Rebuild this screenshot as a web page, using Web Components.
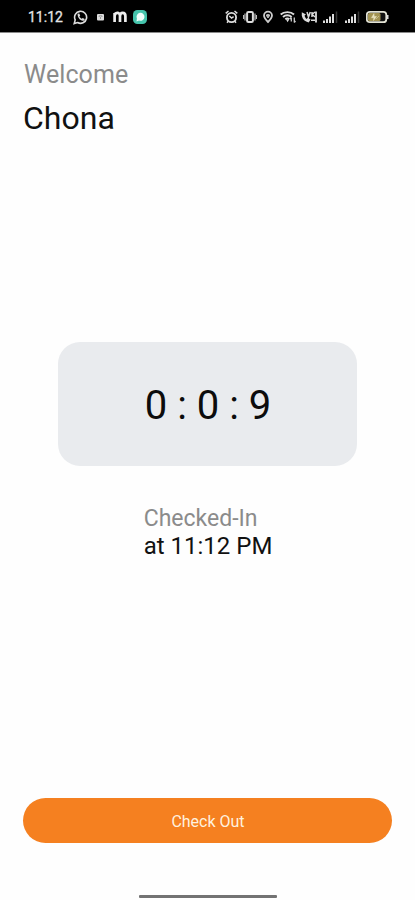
<!DOCTYPE html>
<html lang="en">
<head>
    <meta charset="UTF-8">
    <title>Check In</title>
    <style>
        body {
            margin: 0;
            background: #fefefe;
            font-family: Roboto, sans-serif;
        }
    </style>
</head>
<body>

<template id="status-bar">
    <style>
        :host {
            display: flex;
            justify-content: space-between;
            align-items: center;
            height: 31px;
            padding: 1px 26px 0 28px;
            background: #000;
            border-bottom: 1px solid #8a8a8a;
            color: #e4e4e4;
            font-size: 14px;
        }

        .group {
            display: flex;
            align-items: center;
        }

        .time {
            width: 45px;
            white-space: nowrap;
            -webkit-text-stroke: .3px;
        }
    </style>
    <div class="group">
        <div class="time"><slot name="time"></slot></div>
        <slot name="left"></slot>
    </div>
    <div class="group">
        <slot name="right"></slot>
    </div>
</template>

<template id="check-in-screen">
    <style>
        :host {
            display: flex;
            flex-direction: column;
            height: 900px;
            overflow: hidden;
        }

        .header {
            padding: 27px 24px 0;
            height: 282px;
            box-sizing: border-box;
        }

        .main {
            flex: 1;
        }

        .footer {
            padding: 0 23px 52px;
        }

        .home {
            width: 138px;
            height: 3px;
            margin: 0 auto 2px;
            border-radius: 1px;
            background: #737373;
        }
    </style>
    <slot name="status"></slot>
    <div class="header"><slot name="header"></slot></div>
    <div class="main"><slot></slot></div>
    <div class="footer"><slot name="footer"></slot></div>
    <div class="home"></div>
</template>

<check-in-screen>
    <status-bar slot="status">
        <span slot="time">11:12</span>
        <status-icon slot="left" name="whatsapp"></status-icon>
        <status-icon slot="left" name="app"></status-icon>
        <status-icon slot="left" name="moj"></status-icon>
        <status-icon slot="left" name="chat"></status-icon>
        <status-icon slot="right" name="alarm"></status-icon>
        <status-icon slot="right" name="vibrate"></status-icon>
        <status-icon slot="right" name="pin"></status-icon>
        <status-icon slot="right" name="wifi"></status-icon>
        <status-icon slot="right" name="call"></status-icon>
        <status-icon slot="right" name="signal"></status-icon>
        <status-icon slot="right" name="signal"></status-icon>
        <status-icon slot="right" name="battery"></status-icon>
    </status-bar>
    <welcome-title slot="header">
        <span slot="label">Welcome</span>
        <span slot="name">Chona</span>
    </welcome-title>
    <timer-card>0 : 0 : 9</timer-card>
    <check-status>
        <span slot="state">Checked-In</span>
        <span slot="time">at 11:12 PM</span>
    </check-status>
    <action-button slot="footer">Check Out</action-button>
</check-in-screen>

<script>
    // every icon has its width, the space before it and its shapes, 16px high
    const icons = {
        whatsapp: [15, 0, `
            <path d="M1.2 14.6l1-3.7a6 6 0 1 1 2.4 2.6z" fill="none" stroke="#ddd" stroke-width="1.6"/>
            <path d="M4.6 4.7l1.600-.3 1 2.200-.8 1c.6 1.100 1.300 1.700 2.300 2.200l1-.9 2 1.100c0 1.200-1 1.900-2 1.800-2.700-.4-5.200-3.200-5.100-7.100z" fill="#ddd"/>`],
        app: [7, 9, `
            <rect y="5" width="7" height="6.500" rx="1" fill="#ddd"/>
            <path d="M2.200 8V6.800h2.700V8M3.500 8v2" fill="none" stroke="#888" stroke-width=".8"/>`],
        moj: [14, 9, `
            <path d="M1.600 13V4M1.600 7.500C1.600 2.800 7 2.800 7 7V13M7 7.200c0-4.400 5.400-4.400 5.400 0V13" fill="none" stroke="#eee" stroke-width="2.700"/>`],
        chat: [14, 6, `
            <rect y="1" width="14" height="14" rx="4.500" fill="#45c4ac"/>
            <path d="M3.500 12.500l.4-3a4 4 0 1 1 2.100 2z" fill="#effffb"/>`],
        alarm: [13, 0, `
            <circle cx="6.500" cy="8.500" r="4.600" fill="none" stroke="#ddd" stroke-width="1.800"/>
            <path d="M.7 4.300L3.500 2M12.300 4.300L9.500 2M4.300 7l2.300 2 2-1.400M3.200 12.300L2 13.800M9.800 12.300L11 13.800" fill="none" stroke="#ddd" stroke-width="1.500"/>`],
        vibrate: [14, 4.5, `
            <rect x="4.100" y="3" width="5.800" height="10" rx="1.300" fill="none" stroke="#ddd" stroke-width="2"/>
            <path d="M2 4.500v7M12 4.500v7M.5 6v4M13.500 6v4" stroke="#bbb" stroke-width="1.200"/>`],
        pin: [10, 6, `
            <path d="M5 13C2.500 10.500 1 8.600 1 6.600a4 4 0 0 1 8 0c0 2-1.500 3.900-4 6.400z" fill="none" stroke="#ccc" stroke-width="1.800"/>
            <path d="M3 6.500h4M5 5v4" stroke="#bbb" stroke-width="1.800"/>`],
        wifi: [16, 7, `
            <path d="M.7 5.500C4 2.300 10.800 2.300 14 5.500M3 8c2.400-2.300 6.200-2.300 8.600 0M5.300 10.300c1.200-1 2.800-1 4 0" fill="none" stroke="#ddd" stroke-width="1.900"/>
            <path d="M6 10.500h3.200l-1.600 2.800z" fill="#ddd"/>
            <path d="M11.300 12.500V8.500M10 10L11.300 8.500M14.300 8.500v5M15.500 12l-1.300 1.500" fill="none" stroke="#ccc" stroke-width="1.300"/>`],
        call: [16, 5, `
            <path d="M.8 3.300v3.500c.7 3.500 3.200 6 6.900 6.600l1.900-2.800-2.800-1.800-1.200 1.100C4.400 9 3.800 7.700 3.600 6.500l1.400-1z" fill="#ddd"/>
            <path d="M6 3l1.500 5L9.300 3M11 3v5M11 5.500L14 3M11 5.300l3 2.700M10 11.300h4" fill="none" stroke="#ddd" stroke-width="1.500"/>
            <path d="M15 2.500v11" stroke="#ddd" stroke-width="1.800"/>`],
        signal: [15, 6.5, `
            <path d="M1 14v-2.500M4 14v-4M7 14V7.500M10 14V5" stroke="#ddd" stroke-width="2"/>
            <path d="M13.500 14V2.500" stroke="#383838" stroke-width="1.500"/>`],
        battery: [23, 6.5, `
            <rect x=".8" y="2.800" width="19.500" height="10.400" rx="3" fill="#111" stroke="#e2e2d4" stroke-width="1.800"/>
            <rect x="2" y="4" width="12.500" height="8" rx="1.500" fill="#a29352"/>
            <path d="M8 4.600L5.500 8.700h2.400L7.500 11.500l3-4H8.200zM10 10l3-3" fill="#e9e3bf" stroke="#e9e3bf" stroke-width=".5"/>
            <path d="M21.600 6v4" stroke="#ddd" stroke-width="1.800"/>`]
    };

    class StatusIcon extends HTMLElement {
        constructor() {
            super();
            const shadow = this.attachShadow({mode: 'open'});
            const [width, space, shapes] = icons[this.getAttribute('name')];
            shadow.innerHTML = `
                <style>
                    :host {
                        display: block;
                        flex: none;
                        height: 16px;
                        margin-left: ${space}px;
                    }
                    svg {
                        display: block;
                    }
                </style>
                <svg width="${width}" height="16" viewBox="0 0 ${width} 16">${shapes}</svg>`;
        }
    }

    customElements.define('status-icon', StatusIcon);

    class StatusBar extends HTMLElement {
        constructor() {
            super();
            const shadow = this.attachShadow({mode: 'open'});
            const template = document.getElementById('status-bar');
            shadow.appendChild(document.importNode(template.content, true));
        }
    }

    customElements.define('status-bar', StatusBar);

    class WelcomeTitle extends HTMLElement {
        constructor() {
            super();
            const shadow = this.attachShadow({mode: 'open'});
            shadow.innerHTML = `
                <style>
                    :host {
                        display: block;
                    }
                    .label {
                        color: #8b8b8b;
                        font-size: 25px;
                        line-height: 30px;
                        letter-spacing: .1px;
                    }
                    .name {
                        margin: 9px 0 0 -1px;
                        color: #111;
                        font-size: 32px;
                        line-height: 38px;
                    }
                </style>
                <div class="label"><slot name="label"></slot></div>
                <div class="name"><slot name="name"></slot></div>`;
        }
    }

    customElements.define('welcome-title', WelcomeTitle);

    class TimerCard extends HTMLElement {
        constructor() {
            super();
            const shadow = this.attachShadow({mode: 'open'});
            shadow.innerHTML = `
                <style>
                    :host {
                        display: flex;
                        justify-content: center;
                        align-items: center;
                        width: 299px;
                        height: 124px;
                        margin: 27px auto 0;
                        padding: 3px 0 0 1px;
                        box-sizing: border-box;
                        border-radius: 22px;
                        background: #e9ebee;
                        color: #0c0c0c;
                        font-size: 40px;
                    }
                </style>
                <div><slot></slot></div>`;
        }
    }

    customElements.define('timer-card', TimerCard);

    class CheckStatus extends HTMLElement {
        constructor() {
            super();
            const shadow = this.attachShadow({mode: 'open'});
            shadow.innerHTML = `
                <style>
                    :host {
                        display: block;
                        width: fit-content;
                        margin: 39px auto 0;
                        padding-left: 1px;
                        font-size: 23px;
                        line-height: 28px;
                    }
                    .state {
                        color: #8b8b8b;
                    }
                    .time {
                        margin-top: -1px;
                        color: #111;
                        font-size: 24px;
                    }
                </style>
                <div class="state"><slot name="state"></slot></div>
                <div class="time"><slot name="time"></slot></div>`;
        }
    }

    customElements.define('check-status', CheckStatus);

    class ActionButton extends HTMLElement {
        constructor() {
            super();
            const shadow = this.attachShadow({mode: 'open'});
            shadow.innerHTML = `
                <style>
                    :host {
                        display: block;
                    }
                    button {
                        display: block;
                        width: 100%;
                        height: 45px;
                        padding: 1px 0 0 1px;
                        border: 0;
                        border-radius: 23px;
                        background: #f58020;
                        color: #fff1df;
                        font: 400 16px Roboto, sans-serif;
                        cursor: pointer;
                    }
                </style>
                <button><slot></slot></button>`;
        }
    }

    customElements.define('action-button', ActionButton);

    class CheckInScreen extends HTMLElement {
        constructor() {
            super();
            const shadow = this.attachShadow({mode: 'open'});
            const template = document.getElementById('check-in-screen');
            shadow.appendChild(document.importNode(template.content, true));
        }
    }

    customElements.define('check-in-screen', CheckInScreen);
</script>
</body>
</html>
